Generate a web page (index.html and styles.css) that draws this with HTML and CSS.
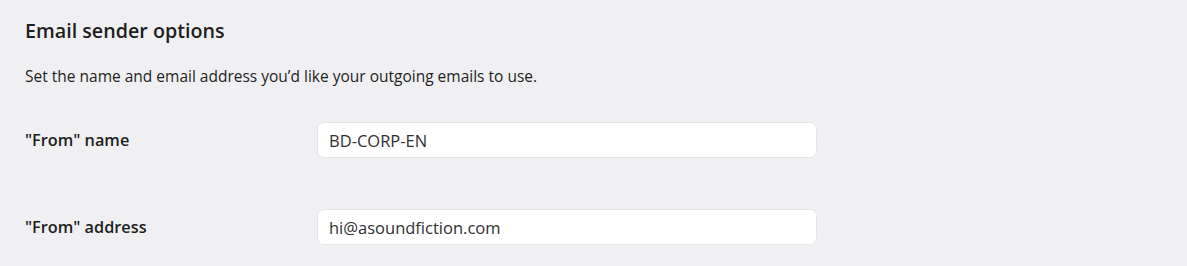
FILE: index.html
```html
<!DOCTYPE html>
<html lang="en">
<head>
<meta charset="utf-8">
<title>Email sender options</title>
<link rel="stylesheet" href="styles.css">
</head>
<body>
<main class="panel">
  <h2 class="title">Email sender options</h2>
  <p class="desc">Set the name and email address you’d like your outgoing emails to use.</p>
  <div class="rows">
    <div class="row">
      <label class="label" for="fromName">"From" name</label>
      <input class="field" id="fromName" type="text" value="BD-CORP-EN">
    </div>
    <div class="row">
      <label class="label" for="fromAddr">"From" address</label>
      <input class="field" id="fromAddr" type="text" value="hi@asoundfiction.com">
    </div>
  </div>
</main>
</body>
</html>
```
FILE: styles.css
```css
html, body {
  margin: 0;
  padding: 0;
  background: #f0f0f2;
}
body {
  font-family: "Open Sans", "Noto Sans", sans-serif;
  color: #1e1e1e;
}
.panel {
  padding: 18px 25px 0 25px;
}
.title {
  margin: 0;
  font-size: 19.7px;
  font-weight: 600;
  line-height: 26px;
  color: #1e1e1e;
}
.desc {
  margin: 21px 0 0 0;
  font-size: 15.5px;
  line-height: 22px;
}
.rows {
  display: flex;
  flex-direction: column;
  gap: 51px;
  margin-top: 35px;
}
.row {
  display: flex;
  align-items: center;
}
.label {
  width: 292px;
  flex: none;
  font-size: 16.3px;
  font-weight: 600;
}
.field {
  box-sizing: border-box;
  width: 500px;
  height: 36px;
  margin: 0;
  padding: 0 11px;
  border: 1px solid #e6e6e9;
  border-radius: 7px;
  background: #ffffff;
  font-family: "Open Sans", "Noto Sans", sans-serif;
  font-size: 16.5px;
  color: #303030;
  outline: none;
}
```
